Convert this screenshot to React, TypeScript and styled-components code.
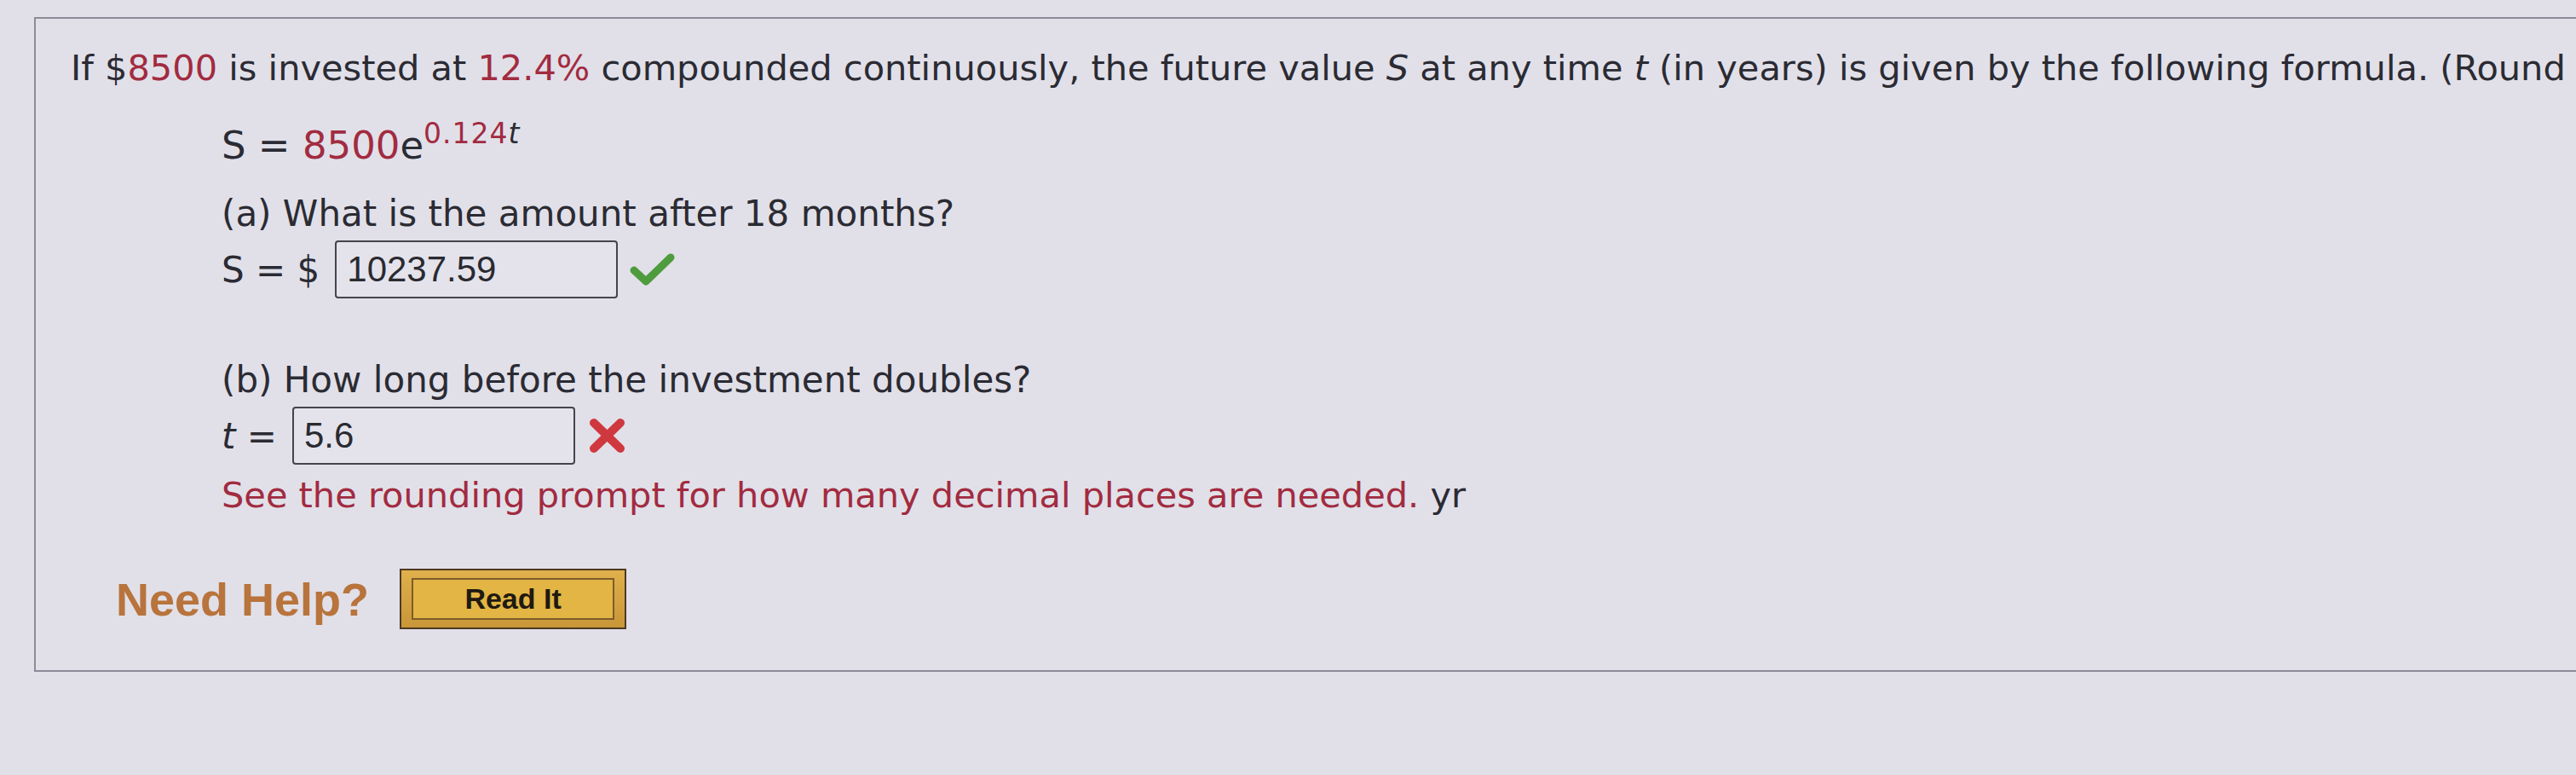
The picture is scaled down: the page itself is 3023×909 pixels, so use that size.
import React from "react";
import styled, { createGlobalStyle } from "styled-components";

const GlobalStyle = createGlobalStyle`
  html, body {
    margin: 0;
    padding: 0;
    background: #e1e0e9;
    overflow: hidden;
  }
  body {
    width: 3023px;
    height: 909px;
    font-family: "DejaVu Sans", Verdana, sans-serif;
    color: #2b2b33;
  }
`;

export default function App() {
  return (
    <Page>
      <GlobalStyle />
      <Panel>
        <Intro>
          If $<Red>8500</Red> is invested at <Red>12.4%</Red> compounded continuously, the future value{" "}
          <Var>S</Var> at any time <Var>t</Var> (in years) is given by the following formula. (Round
        </Intro>
        <Body>
          <Formula>
            S = <Red>8500</Red>e
            <Sup>
              <Red>0.124</Red>
              <Var>t</Var>
            </Sup>
          </Formula>
          <Question $top={32}>(a) What is the amount after 18 months?</Question>
          <AnswerRow>
            <Label>S = $</Label>
            <AnswerBox>10237.59</AnswerBox>
            <Mark>
              <svg width="54" height="40" viewBox="0 0 54 40">
                <path d="M5 21 L19 34 L48 6" fill="none" stroke="#4f9c3f" strokeWidth="9" strokeLinecap="round" strokeLinejoin="round" />
              </svg>
            </Mark>
          </AnswerRow>
          <Question $top={72}>(b) How long before the investment doubles?</Question>
          <AnswerRow>
            <Label>
              <Var>t</Var> =
            </Label>
            <AnswerBox>5.6</AnswerBox>
            <Mark>
              <svg width="48" height="44" viewBox="0 0 48 44">
                <path d="M8 7 L39 37 M39 7 L8 37" fill="none" stroke="#d0383f" strokeWidth="10" strokeLinecap="round" />
              </svg>
            </Mark>
          </AnswerRow>
          <Hint>
            <Red>See the rounding prompt for how many decimal places are needed.</Red> yr
          </Hint>
        </Body>
        <HelpRow>
          <HelpLabel>Need Help?</HelpLabel>
          <ReadButton>
            <ReadInner>Read It</ReadInner>
          </ReadButton>
        </HelpRow>
      </Panel>
    </Page>
  );
}

const Page = styled.div`
  padding: 20px 0 0 40px;
`;

const Panel = styled.div`
  border-top: 2px solid #8c8b98;
  border-left: 2px solid #8c8b98;
  border-bottom: 2px solid #8c8b98;
  padding: 34px 0 48px 41px;
`;

const Intro = styled.div`
  font-size: 41.5px;
  line-height: 48px;
  white-space: nowrap;
`;

const Red = styled.span`
  color: #a22b40;
`;

const Var = styled.i`
  font-style: italic;
`;

const Body = styled.div`
  padding-left: 177px;
`;

const Formula = styled.div`
  margin-top: 43px;
  font-size: 45px;
  line-height: 48px;
`;

const Sup = styled.sup`
  font-size: 33px;
  vertical-align: 18px;
  line-height: 0;
  letter-spacing: 1px;
`;

const Question = styled.div<{ $top: number }>`
  margin-top: ${(p) => p.$top}px;
  font-size: 42px;
  line-height: 48px;
`;

const AnswerRow = styled.div`
  margin-top: 7px;
  display: flex;
  align-items: center;
`;

const Label = styled.span`
  font-size: 42px;
  margin-right: 18px;
`;

const AnswerBox = styled.div`
  width: 316px;
  height: 64px;
  border: 2px solid #44444c;
  border-radius: 4px;
  padding-left: 12px;
  display: flex;
  align-items: center;
  font-family: "Liberation Sans", Arial, sans-serif;
  font-size: 42px;
  color: #2a2a30;
  background: #e4e3ec;
`;

const Mark = styled.span`
  margin-left: 14px;
  display: flex;
  align-items: center;
`;

const Hint = styled.div`
  margin-top: 12px;
  font-size: 41.5px;
  line-height: 48px;
`;

const HelpRow = styled.div`
  margin-top: 62px;
  padding-left: 53px;
  display: flex;
  align-items: center;
  gap: 36px;
`;

const HelpLabel = styled.span`
  font-family: "Liberation Sans", Arial, sans-serif;
  font-weight: bold;
  font-size: 54px;
  color: #b8743c;
`;

const ReadButton = styled.div`
  display: flex;
  box-sizing: border-box;
  width: 266px;
  height: 71px;
  padding: 9px 12px;
  border: 2px solid #4e3a22;
  background: linear-gradient(#e0b04c, #c99638);
`;

const ReadInner = styled.div`
  flex: 1;
  border: 2px solid #7d5c2a;
  background: #e2b544;
  display: flex;
  align-items: center;
  justify-content: center;
  font-family: "Liberation Sans", Arial, sans-serif;
  font-weight: bold;
  font-size: 34px;
  color: #1f1a12;
`;
